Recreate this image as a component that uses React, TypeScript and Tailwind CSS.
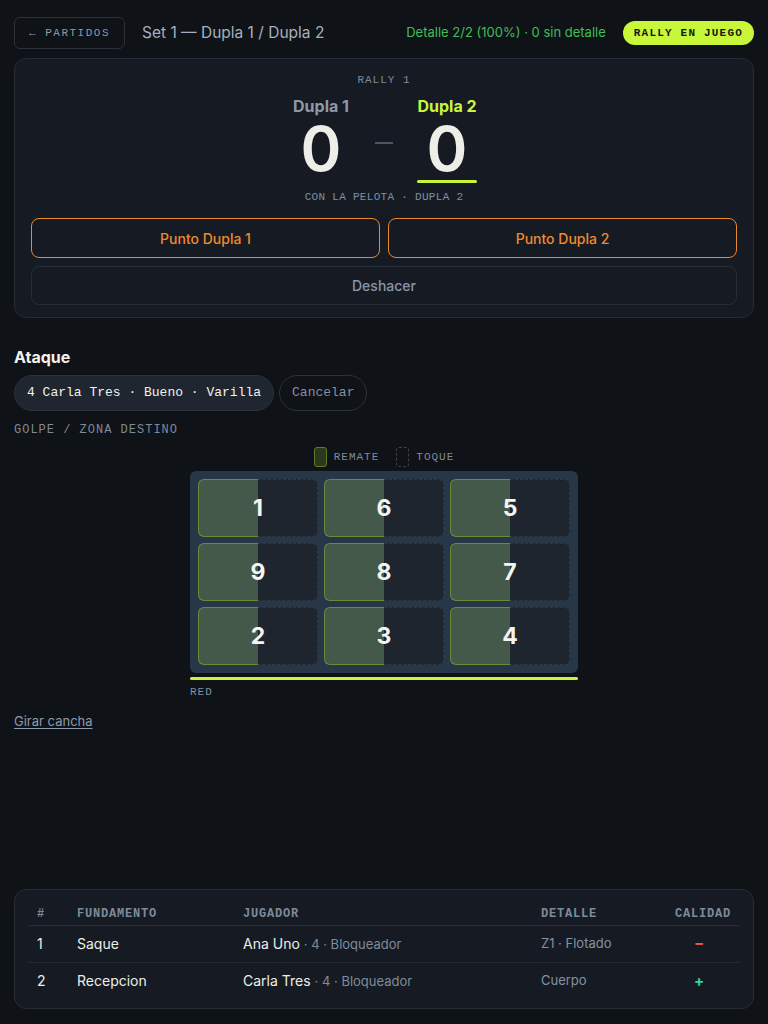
import React from "react";

type Zona = { n: number };

const filas: Zona[][] = [
  [{ n: 1 }, { n: 6 }, { n: 5 }],
  [{ n: 9 }, { n: 8 }, { n: 7 }],
  [{ n: 2 }, { n: 3 }, { n: 4 }],
];

const jugadas = [
  { id: 1, fundamento: "Saque", jugador: "Ana Uno", extra: "· 4 · Bloqueador", detalle: "Z1 · Flotado", calidad: "−", color: "text-[#f0594c]" },
  { id: 2, fundamento: "Recepcion", jugador: "Carla Tres", extra: "· 4 · Bloqueador", detalle: "Cuerpo", calidad: "+", color: "text-[#2fd6a0]" },
];

const sans = "font-['Inter','Noto_Sans',sans-serif]";
const mono = "font-['Liberation_Mono','DejaVu_Sans_Mono',monospace]";

const Celda = ({ n }: Zona) => (
  <div className="relative grid h-[58px] grid-cols-2">
    <div className="rounded-l-md border border-r-0 border-[#6b8a38] bg-[#45594a]" />
    <div className="rounded-r-md border border-l-0 border-dashed border-[#2e3945] bg-[#1e252f]" />
    <span className="absolute inset-0 flex items-center justify-center text-[23px] font-bold text-[#f4f5f2]">
      {n}
    </span>
  </div>
);

export default function App() {
  return (
    <div className={`${sans} flex min-h-[1024px] flex-col bg-[#0f1217] px-[14px] pb-[15px] pt-[17px] text-[#eceee8]`}>
      {/* cabecera */}
      <div className="flex h-[32px] items-center">
        <button className={`${mono} h-[32px] rounded-md border border-[#2a313b] px-[14px] text-[11px] tracking-[1.5px] text-[#8e9aaa]`}>
          ← PARTIDOS
        </button>
        <span className="ml-[17px] text-[15.5px] text-[#a5b0bd]">Set 1 — Dupla 1 / Dupla 2</span>
        <span className="ml-auto text-[13px] text-[#3fbf55]">Detalle 2/2 (100%) · 0 sin detalle</span>
        <span className={`${mono} ml-[17px] flex h-[24px] items-center rounded-full bg-[#c8f73a] px-[11px] text-[11px] font-bold tracking-[1.2px] text-[#161a10]`}>
          RALLY EN JUEGO
        </span>
      </div>

      {/* marcador */}
      <div className="mt-[9px] rounded-xl border border-[#262d37] bg-[#161b23] px-[16px] pb-[12px] pt-[13px]">
        <div className={`${mono} text-center text-[11px] leading-[16px] tracking-[1px] text-[#7d8a9a]`}>RALLY 1</div>
        <div className="mt-[7px] flex items-start justify-center gap-[24px]">
          <div className="flex w-[60px] flex-col items-center">
            <span className="whitespace-nowrap text-[16px] font-bold leading-[22px] text-[#8e99a8]">Dupla 1</span>
            <span className="text-[62px] font-semibold leading-[64px]">0</span>
          </div>
          <div className="mt-[47px] h-[2px] w-[18px] bg-[#4b5563]" />
          <div className="flex w-[60px] flex-col items-center">
            <span className="whitespace-nowrap text-[16px] font-bold leading-[22px] text-[#c8f73a]">Dupla 2</span>
            <span className="text-[62px] font-semibold leading-[64px]">0</span>
            <div className="mt-[-1px] h-[3px] w-[60px] rounded-full bg-[#c8f73a]" />
          </div>
        </div>
        <div className={`${mono} mt-[6px] text-center text-[11px] leading-[16px] tracking-[0.3px] text-[#7d8fa6]`}>
          CON LA PELOTA · DUPLA 2
        </div>
        <div className="mt-[13px] grid grid-cols-2 gap-[8px]">
          <button className="h-[40px] rounded-lg border border-[#e8892c] text-[14px] font-medium text-[#ef8a2e]">
            Punto Dupla 1
          </button>
          <button className="h-[40px] rounded-lg border border-[#e8892c] text-[14px] font-medium text-[#ef8a2e]">
            Punto Dupla 2
          </button>
        </div>
        <button className="mt-[8px] h-[39px] w-full rounded-lg border border-[#262d37] text-[14px] font-medium text-[#8a96a6]">
          Deshacer
        </button>
      </div>

      {/* ataque */}
      <div className="mt-[27px] text-[16px] font-bold text-[#f0f2ee]">Ataque</div>
      <div className="mt-[6px] flex gap-[5px]">
        <span className={`${mono} flex h-[36px] items-center rounded-full border border-[#2a323d] bg-[#1f2630] px-[12px] text-[13px] text-[#f0f2ee]`}>
          4 Carla Tres · Bueno · Varilla
        </span>
        <span className={`${mono} flex h-[36px] items-center rounded-full border border-[#2a323d] px-[12px] text-[13px] text-[#8490a0]`}>
          Cancelar
        </span>
      </div>
      <div className={`${mono} mt-[10px] text-[12px] tracking-[1px] text-[#7d8a9a]`}>GOLPE / ZONA DESTINO</div>

      <div className="mt-[8px] flex items-center justify-center gap-[7px]">
        <span className="h-[20px] w-[13px] rounded-[3px] border border-[#5e7a2a] bg-[#2b3a1c]" />
        <span className={`${mono} text-[11px] tracking-[1px] text-[#7d8a9a]`}>REMATE</span>
        <span className="ml-[10px] h-[20px] w-[13px] rounded-[3px] border border-dashed border-[#3a424d]" />
        <span className={`${mono} text-[11px] tracking-[1px] text-[#7d8a9a]`}>TOQUE</span>
      </div>

      <div className="mx-auto mt-[4px] w-[388px]">
        <div className="flex flex-col gap-[6px] rounded-md bg-[#283747] p-[8px]">
          {filas.map((fila, i) => (
            <div key={i} className="grid grid-cols-3 gap-[6px]">
              {fila.map((z) => (
                <Celda key={z.n} n={z.n} />
              ))}
            </div>
          ))}
        </div>
        <div className="mt-[4px] h-[3px] rounded-full bg-[#c8f73a]" />
        <div className={`${mono} mt-[4px] text-[11px] tracking-[1px] text-[#7d8fa6]`}>RED</div>
      </div>

      <button className="mt-[11px] self-start text-[13px] text-[#8a9bb0] underline underline-offset-2">
        Girar cancha
      </button>

      {/* tabla de jugadas */}
      <div className="mt-auto rounded-xl border border-[#262d37] bg-[#161b23] px-[13px] pb-[9px] pt-[16px]">
        <table className="w-full border-collapse text-left">
          <thead>
            <tr className={`${mono} border-b border-[#262d37] text-[12px] font-bold leading-[16px] tracking-[0.8px] text-[#7d8a9a]`}>
              <th className="w-[49px] pb-[3px] pl-[9px] font-bold">#</th>
              <th className="w-[166px] pb-[3px] font-bold">FUNDAMENTO</th>
              <th className="w-[298px] pb-[3px] font-bold">JUGADOR</th>
              <th className="pb-[3px] font-bold">DETALLE</th>
              <th className="w-[70px] pb-[3px] pr-[9px] text-right font-bold">CALIDAD</th>
            </tr>
          </thead>
          <tbody>
            {jugadas.map((j, i) => (
              <tr key={j.id} className={i === 0 ? "border-b border-[#232a34]" : ""}>
                <td className="h-[37px] pl-[9px] text-[14px] text-[#eceee8]">{j.id}</td>
                <td className="text-[14px] text-[#eceee8]">{j.fundamento}</td>
                <td className="text-[14px] text-[#eceee8]">
                  {j.jugador} <span className="text-[13px] text-[#7f8b9a]">{j.extra}</span>
                </td>
                <td className="text-[13px] text-[#8591a1]">{j.detalle}</td>
                <td className={`pr-[12px] text-center text-[15px] font-bold ${j.color}`}>{j.calidad}</td>
              </tr>
            ))}
          </tbody>
        </table>
      </div>
    </div>
  );
}
